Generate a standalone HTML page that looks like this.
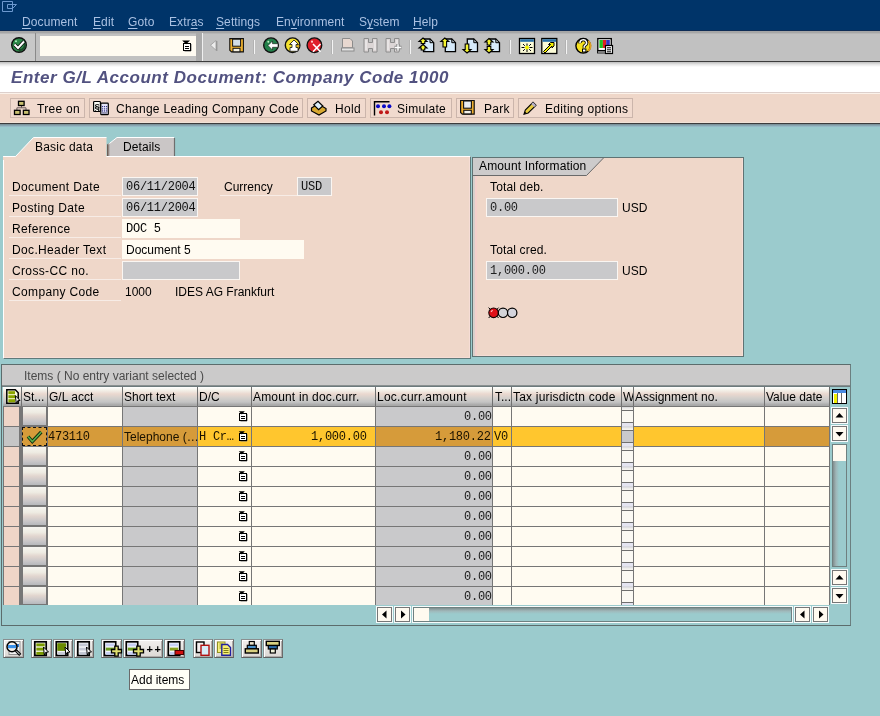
<!DOCTYPE html><html><head><meta charset="utf-8"><style>
html,body{margin:0;padding:0;width:880px;height:716px;overflow:hidden;background:#9bcbcd}
.a{position:absolute}
.s,.m,.b{will-change:transform}
.s{font:12px/14px "Liberation Sans",sans-serif;white-space:nowrap;color:#000}
.m{font:12px/14px "Liberation Mono",monospace;white-space:nowrap;letter-spacing:-0.25px;color:#000}
.b{font:italic bold 17px/18px "Liberation Sans",sans-serif;white-space:nowrap}
u{text-decoration:underline;text-underline-offset:2px}
</style></head><body>
<div class="a" style="left:0px;top:0px;width:880px;height:30px;background:#003469"></div>
<div class="a" style="left:0px;top:30px;width:880px;height:1px;background:#0e2c55"></div>
<svg class="a" style="left:0;top:0" width="20" height="14"><path d="M2.5 1.5H12.5V11.5H2.5Z M7.5 4.5H12.5L16.5 4.5L12.5 8.5H7.5Z" fill="none" stroke="#6c98cf" stroke-width="1"/></svg>
<div class="a s" style="left:22px;top:15px;color:#a9c0e2;letter-spacing:0.1px"><u>D</u>ocument</div>
<div class="a s" style="left:93px;top:15px;color:#a9c0e2;letter-spacing:0.1px"><u>E</u>dit</div>
<div class="a s" style="left:128px;top:15px;color:#a9c0e2;letter-spacing:0.1px"><u>G</u>oto</div>
<div class="a s" style="left:168.5px;top:15px;color:#a9c0e2;letter-spacing:0.1px">Extr<u>a</u>s</div>
<div class="a s" style="left:216px;top:15px;color:#a9c0e2;letter-spacing:0.1px"><u>S</u>ettings</div>
<div class="a s" style="left:275.5px;top:15px;color:#a9c0e2;letter-spacing:0.1px">En<u>v</u>ironment</div>
<div class="a s" style="left:358.5px;top:15px;color:#a9c0e2;letter-spacing:0.1px">S<u>y</u>stem</div>
<div class="a s" style="left:413px;top:15px;color:#a9c0e2;letter-spacing:0.1px"><u>H</u>elp</div>
<div class="a" style="left:0px;top:31px;width:880px;height:30px;background:linear-gradient(#a6a6a6 0,#a6a6a6 2px,#b6b6b6 2px,#b6b6b6 3px,#c1c1c1 3px,#c1c1c1 100%)"></div>
<div class="a" style="left:0px;top:61px;width:880px;height:1px;background:#3c3c3c"></div>
<div class="a" style="left:0px;top:62px;width:880px;height:5px;background:linear-gradient(#bdbdbd,#e6e6e6 50%,#ffffff)"></div>
<div class="a" style="left:0px;top:34px;width:35px;height:27px;background:#c8c8c8"></div>
<div class="a" style="left:35px;top:33px;width:1px;height:28px;background:#8a8a8a"></div>
<div class="a" style="left:196px;top:33px;width:6px;height:28px;background:#ababab"></div>
<div class="a" style="left:202px;top:33px;width:1px;height:28px;background:#f0f0f0"></div>
<div class="a" style="left:40px;top:36px;width:156px;height:20px;background:#fffbf1"></div>
<div class="a" style="left:0px;top:67px;width:880px;height:25px;background:#ffffff"></div>
<div class="a" style="left:0px;top:92px;width:880px;height:1px;background:#ddd0cc"></div>
<div class="a b" style="left:11px;top:68.5px;color:#525280;letter-spacing:0.54px">Enter G/L Account Document: Company Code 1000</div>
<div class="a" style="left:0px;top:93px;width:880px;height:30px;background:#efd7c9"></div>
<div class="a" style="left:0px;top:93px;width:880px;height:1px;background:#fbf2ea"></div>
<div class="a" style="left:0px;top:122px;width:880px;height:1px;background:#efe2d6"></div>
<div class="a" style="left:0px;top:124px;width:880px;height:592px;background:#9bcbcd"></div>
<div class="a" style="left:0px;top:123px;width:880px;height:1px;background:#3c3c3c"></div>
<div class="a" style="left:0px;top:124px;width:880px;height:3px;background:linear-gradient(#748890,#9cc4d0)"></div>
<div class="a" style="left:10px;top:98px;width:75px;height:20px;box-sizing:border-box;border:1px solid #cbb5ab;background:#f1dace"></div>
<div class="a s" style="left:37px;top:102px;color:#000;letter-spacing:0.3px">Tree on</div>
<div class="a" style="left:89px;top:98px;width:214px;height:20px;box-sizing:border-box;border:1px solid #cbb5ab;background:#f1dace"></div>
<div class="a s" style="left:116px;top:102px;color:#000;letter-spacing:0.3px">Change Leading Company Code</div>
<div class="a" style="left:307px;top:98px;width:59px;height:20px;box-sizing:border-box;border:1px solid #cbb5ab;background:#f1dace"></div>
<div class="a s" style="left:334.5px;top:102px;color:#000;letter-spacing:0.3px">Hold</div>
<div class="a" style="left:370px;top:98px;width:82px;height:20px;box-sizing:border-box;border:1px solid #cbb5ab;background:#f1dace"></div>
<div class="a s" style="left:397px;top:102px;color:#000;letter-spacing:0.3px">Simulate</div>
<div class="a" style="left:456px;top:98px;width:58px;height:20px;box-sizing:border-box;border:1px solid #cbb5ab;background:#f1dace"></div>
<div class="a s" style="left:483.5px;top:102px;color:#000;letter-spacing:0.3px">Park</div>
<div class="a" style="left:518px;top:98px;width:115px;height:20px;box-sizing:border-box;border:1px solid #cbb5ab;background:#f1dace"></div>
<div class="a s" style="left:545px;top:102px;color:#000;letter-spacing:0.3px">Editing options</div>
<div class="a" style="left:3px;top:156px;width:468px;height:203px;background:#efd7c9;box-sizing:border-box;border-left:1px solid #fff;border-top:1px solid #fff;border-right:1px solid #5f7a7a;border-bottom:1px solid #5f7a7a;box-shadow:inset -1px -1px 0 #f6ddd6"></div>
<svg class="a" style="left:100px;top:130px" width="80" height="28"><path d="M7 26 V15 L17 7.5 H74.5 V26 Z" fill="#cac6c6"/><path d="M7.5 15 L17 7.5 H74" fill="none" stroke="#ffffff" stroke-width="1"/><path d="M74.5 8 V26" stroke="#6e6e6e" stroke-width="1.2"/><defs><linearGradient id="shd" x1="0" x2="1"><stop offset="0" stop-color="#5a4a40"/><stop offset="1" stop-color="#5a4a40" stop-opacity="0"/></linearGradient></defs><path d="M7 26 V14.5 L10 12.5 V26 Z" fill="url(#shd)"/></svg>
<svg class="a" style="left:2px;top:136px" width="106" height="22"><path d="M1.5 21 V20.5 H13.5 L31.5 1.5 H104.5 V21 Z" fill="#efd7c9"/><path d="M1.5 21 V20.5 H13.5 L31.5 1.5 H104.5" fill="none" stroke="#ffffff" stroke-width="1"/></svg>
<div class="a" style="left:3px;top:157px;width:102px;height:3px;background:#efd7c9"></div>
<div class="a s" style="left:34.5px;top:140px;letter-spacing:0.2px">Basic data</div>
<div class="a s" style="left:122.5px;top:140px;letter-spacing:0.1px">Details</div>
<div class="a s" style="left:12px;top:180px;letter-spacing:0.35px">Document Date</div>
<div class="a" style="left:9px;top:195px;width:112px;height:1px;background:#f7ece6"></div>
<div class="a s" style="left:12px;top:201px;letter-spacing:0.35px">Posting Date</div>
<div class="a" style="left:9px;top:216px;width:112px;height:1px;background:#f7ece6"></div>
<div class="a s" style="left:12px;top:222px;letter-spacing:0.35px">Reference</div>
<div class="a" style="left:9px;top:237px;width:112px;height:1px;background:#f7ece6"></div>
<div class="a s" style="left:12px;top:242.5px;letter-spacing:0.35px">Doc.Header Text</div>
<div class="a" style="left:9px;top:258px;width:112px;height:1px;background:#f7ece6"></div>
<div class="a s" style="left:12px;top:263.5px;letter-spacing:0.35px">Cross-CC no.</div>
<div class="a" style="left:9px;top:279px;width:112px;height:1px;background:#f7ece6"></div>
<div class="a s" style="left:12px;top:284.5px;letter-spacing:0.35px">Company Code</div>
<div class="a" style="left:9px;top:300px;width:112px;height:1px;background:#f7ece6"></div>
<div class="a" style="left:122px;top:177px;width:76px;height:19px;background:#c9c9cb;box-sizing:border-box;border:1px solid #faf6f2;"></div>
<div class="a m" style="left:125.5px;top:180px;color:#101010">06/11/2004</div>
<div class="a s" style="left:223.5px;top:180px;letter-spacing:0px">Currency</div>
<div class="a" style="left:220px;top:195px;width:77px;height:1px;background:#f7ece6"></div>
<div class="a" style="left:297px;top:177px;width:35px;height:19px;background:#c9c9cb;box-sizing:border-box;border:1px solid #faf6f2;"></div>
<div class="a m" style="left:300.5px;top:180px;color:#101010">USD</div>
<div class="a" style="left:122px;top:198px;width:76px;height:19px;background:#c9c9cb;box-sizing:border-box;border:1px solid #faf6f2;"></div>
<div class="a m" style="left:125.5px;top:201px;color:#101010">06/11/2004</div>
<div class="a" style="left:122px;top:219px;width:118px;height:19px;background:#fffbf1;box-sizing:border-box;"></div>
<div class="a m" style="left:125.5px;top:222px;color:#000">DOC 5</div>
<div class="a" style="left:122px;top:240px;width:182px;height:19px;background:#fffbf1;box-sizing:border-box;"></div>
<div class="a s" style="left:125.5px;top:242.5px;">Document 5</div>
<div class="a" style="left:122px;top:261px;width:118px;height:19px;background:#c9c9cb;box-sizing:border-box;border:1px solid #faf6f2;"></div>
<div class="a s" style="left:125px;top:284.5px;">1000</div>
<div class="a s" style="left:174.5px;top:284.5px;">IDES AG Frankfurt</div>
<div class="a" style="left:472px;top:157px;width:272px;height:200px;background:#efd7c9;box-sizing:border-box;border:1px solid #5f7373;box-shadow:inset 2px 0 0 #d8d0cc,inset 4px 0 0 #f4d0cc,inset -1px -1px 0 #f6ddd6"></div>
<svg class="a" style="left:472px;top:157px" width="140" height="20"><path d="M1 1 H131.5 L114.5 18.5 H1 Z" fill="#cdcbcb"/><path d="M1 18.5 H114.5 L131.5 1" fill="none" stroke="#6a6a6a" stroke-width="1"/></svg>
<div class="a s" style="left:479px;top:159px;letter-spacing:0.15px">Amount Information</div>
<div class="a s" style="left:489.5px;top:180px;letter-spacing:0.15px">Total deb.</div>
<div class="a" style="left:486px;top:198px;width:132px;height:19px;background:#c9c9cb;box-sizing:border-box;border:1px solid #faf6f2;"></div>
<div class="a m" style="left:489.5px;top:201px;color:#202020">0.00</div>
<div class="a s" style="left:622.3px;top:201px;">USD</div>
<div class="a s" style="left:489.5px;top:243px;letter-spacing:0.15px">Total cred.</div>
<div class="a" style="left:486px;top:261px;width:132px;height:19px;background:#c9c9cb;box-sizing:border-box;border:1px solid #faf6f2;"></div>
<div class="a m" style="left:489.5px;top:264px;color:#202020">1,000.00</div>
<div class="a s" style="left:622.3px;top:264px;">USD</div>
<div class="a" style="left:1px;top:364px;width:850px;height:262px;box-sizing:border-box;border:1px solid #5c6c6c;border-right-color:#6b7f80"></div>
<div class="a" style="left:2px;top:365px;width:848px;height:20px;background:#cbcaca"></div>
<div class="a s" style="left:23.5px;top:369px;color:#4a4a4a">Items ( No entry variant selected )</div>
<div class="a" style="left:2px;top:385px;width:848px;height:1px;background:#8a9090"></div>
<div class="a" style="left:2px;top:386px;width:848px;height:1px;background:#6c7a7c"></div>
<div class="a" style="left:3px;top:387px;width:827px;height:19px;background:#707070"></div>
<div class="a" style="left:3px;top:387px;width:18px;height:19px;background:linear-gradient(#ffffff 0,#f4f2ea 3px,#ead8cf 7px,#d4d0cc 11px,#c4c4c4 15px,#a8a8a8 18px)"></div>
<div class="a" style="left:22px;top:387px;width:25px;height:19px;background:linear-gradient(#ffffff 0,#f4f2ea 3px,#ead8cf 7px,#d4d0cc 11px,#c4c4c4 15px,#a8a8a8 18px)"></div>
<div class="a" style="left:48px;top:387px;width:74px;height:19px;background:linear-gradient(#ffffff 0,#f4f2ea 3px,#ead8cf 7px,#d4d0cc 11px,#c4c4c4 15px,#a8a8a8 18px)"></div>
<div class="a" style="left:123px;top:387px;width:74px;height:19px;background:linear-gradient(#ffffff 0,#f4f2ea 3px,#ead8cf 7px,#d4d0cc 11px,#c4c4c4 15px,#a8a8a8 18px)"></div>
<div class="a" style="left:198px;top:387px;width:53px;height:19px;background:linear-gradient(#ffffff 0,#f4f2ea 3px,#ead8cf 7px,#d4d0cc 11px,#c4c4c4 15px,#a8a8a8 18px)"></div>
<div class="a" style="left:252px;top:387px;width:123px;height:19px;background:linear-gradient(#ffffff 0,#f4f2ea 3px,#ead8cf 7px,#d4d0cc 11px,#c4c4c4 15px,#a8a8a8 18px)"></div>
<div class="a" style="left:376px;top:387px;width:116px;height:19px;background:linear-gradient(#ffffff 0,#f4f2ea 3px,#ead8cf 7px,#d4d0cc 11px,#c4c4c4 15px,#a8a8a8 18px)"></div>
<div class="a" style="left:493px;top:387px;width:18px;height:19px;background:linear-gradient(#ffffff 0,#f4f2ea 3px,#ead8cf 7px,#d4d0cc 11px,#c4c4c4 15px,#a8a8a8 18px)"></div>
<div class="a" style="left:512px;top:387px;width:109px;height:19px;background:linear-gradient(#ffffff 0,#f4f2ea 3px,#ead8cf 7px,#d4d0cc 11px,#c4c4c4 15px,#a8a8a8 18px)"></div>
<div class="a" style="left:622px;top:387px;width:11px;height:19px;background:linear-gradient(#ffffff 0,#f4f2ea 3px,#ead8cf 7px,#d4d0cc 11px,#c4c4c4 15px,#a8a8a8 18px)"></div>
<div class="a" style="left:634px;top:387px;width:130px;height:19px;background:linear-gradient(#ffffff 0,#f4f2ea 3px,#ead8cf 7px,#d4d0cc 11px,#c4c4c4 15px,#a8a8a8 18px)"></div>
<div class="a" style="left:765px;top:387px;width:64px;height:19px;background:linear-gradient(#ffffff 0,#f4f2ea 3px,#ead8cf 7px,#d4d0cc 11px,#c4c4c4 15px,#a8a8a8 18px)"></div>
<div class="a" style="left:22px;top:387px;width:25px;height:18px;overflow:hidden"><div class="a s" style="left:1px;top:2.5px">St...</div></div>
<div class="a" style="left:48.5px;top:387px;width:73.5px;height:18px;overflow:hidden"><div class="a s" style="left:0;top:2.5px;white-space:nowrap;letter-spacing:0px">G/L acct</div></div>
<div class="a" style="left:124px;top:387px;width:73px;height:18px;overflow:hidden"><div class="a s" style="left:0;top:2.5px;white-space:nowrap;letter-spacing:0px">Short text</div></div>
<div class="a" style="left:199px;top:387px;width:52px;height:18px;overflow:hidden"><div class="a s" style="left:0;top:2.5px;white-space:nowrap;letter-spacing:0px">D/C</div></div>
<div class="a" style="left:253px;top:387px;width:122px;height:18px;overflow:hidden"><div class="a s" style="left:0;top:2.5px;white-space:nowrap;letter-spacing:0.17px">Amount in doc.curr.</div></div>
<div class="a" style="left:377px;top:387px;width:115px;height:18px;overflow:hidden"><div class="a s" style="left:0;top:2.5px;white-space:nowrap;letter-spacing:0.25px">Loc.curr.amount</div></div>
<div class="a" style="left:495px;top:387px;width:16px;height:18px;overflow:hidden"><div class="a s" style="left:0;top:2.5px;white-space:nowrap;letter-spacing:0px">T...</div></div>
<div class="a" style="left:513px;top:387px;width:108px;height:18px;overflow:hidden"><div class="a s" style="left:0;top:2.5px;white-space:nowrap;letter-spacing:0.2px">Tax jurisdictn code</div></div>
<div class="a" style="left:622.5px;top:387px;width:10.5px;height:18px;overflow:hidden"><div class="a s" style="left:0;top:2.5px;white-space:nowrap;letter-spacing:0px">W</div></div>
<div class="a" style="left:635px;top:387px;width:129px;height:18px;overflow:hidden"><div class="a s" style="left:0;top:2.5px;white-space:nowrap;letter-spacing:0px">Assignment no.</div></div>
<div class="a" style="left:766px;top:387px;width:63px;height:18px;overflow:hidden"><div class="a s" style="left:0;top:2.5px;white-space:nowrap;letter-spacing:0px">Value date</div></div>
<div class="a" style="left:3px;top:406px;width:827px;height:199px;background:#767676"></div>
<div class="a" style="left:4px;top:407px;width:15px;height:19px;background:#efd5c7"></div>
<div class="a" style="left:23px;top:407px;width:23px;height:18px;background:linear-gradient(#f6f5f0 0,#eeebe2 30%,#e2d6cf 50%,#c8c6c8 80%,#b6b8bc 100%)"></div>
<div class="a" style="left:48px;top:407px;width:74px;height:19px;background:#fffbf1"></div>
<div class="a" style="left:123px;top:407px;width:74px;height:19px;background:#c9c9cb"></div>
<div class="a" style="left:198px;top:407px;width:53px;height:19px;background:#fffbf1"></div>
<div class="a" style="left:252px;top:407px;width:123px;height:19px;background:#fffbf1"></div>
<div class="a" style="left:376px;top:407px;width:116px;height:19px;background:#c9c9cb"></div>
<div class="a" style="left:493px;top:407px;width:18px;height:19px;background:#fffbf1"></div>
<div class="a" style="left:512px;top:407px;width:109px;height:19px;background:#fffbf1"></div>
<div class="a" style="left:622px;top:407px;width:11px;height:19px;background:linear-gradient(#d6d6d8 0,#e8e8e8 1px,#f4f2ee 2px,#f4f2ee 16px,#e4e4f0 16px)"></div>
<div class="a" style="left:622px;top:410px;width:11px;height:13px;background:#fbf9f3;box-sizing:border-box;border-top:1px solid #6e6e6e;border-bottom:1px solid #6e6e6e"></div>
<div class="a" style="left:634px;top:407px;width:130px;height:19px;background:#fffbf1"></div>
<div class="a" style="left:765px;top:407px;width:64px;height:19px;background:#fffbf1"></div>
<svg class="a" style="left:238px;top:410px" width="11" height="13"><path d="M9 4V11H2.5" fill="none" stroke="#707070" stroke-width="1"/><rect x="1.5" y="3.5" width="7" height="7" fill="#fff" stroke="#000" stroke-width="1"/><path d="M1.5 3.5V10.5" stroke="#000" stroke-width="1"/><path d="M0.8 1.3 H6.8 L3.8 4.5 Z" fill="#000"/><path d="M2 3.5H8.5" stroke="#000" stroke-width="1"/><path d="M3 6.5H7M3 8.5H7" stroke="#000" stroke-width="1"/></svg>
<div class="a m" style="left:463.8px;top:410px;color:#1a1a1a">0.00</div>
<div class="a" style="left:4px;top:427px;width:15px;height:19px;background:#c6c6c6"></div>
<div class="a" style="left:23px;top:427px;width:23px;height:18px;background:linear-gradient(#f6f5f0 0,#eeebe2 30%,#e2d6cf 50%,#c8c6c8 80%,#b6b8bc 100%)"></div>
<div class="a" style="left:48px;top:427px;width:74px;height:19px;background:#d69b3a"></div>
<div class="a" style="left:123px;top:427px;width:74px;height:19px;background:#d69b3a"></div>
<div class="a" style="left:198px;top:427px;width:53px;height:19px;background:#ffc62e"></div>
<div class="a" style="left:252px;top:427px;width:123px;height:19px;background:#ffc62e"></div>
<div class="a" style="left:376px;top:427px;width:116px;height:19px;background:#d69b3a"></div>
<div class="a" style="left:493px;top:427px;width:18px;height:19px;background:#ffc62e"></div>
<div class="a" style="left:512px;top:427px;width:109px;height:19px;background:#ffc62e"></div>
<div class="a" style="left:622px;top:426px;width:11px;height:1px;background:#d8d8e0"></div>
<div class="a" style="left:622px;top:427px;width:11px;height:19px;background:linear-gradient(#d6d6d8 0,#e8e8e8 1px,#f4f2ee 2px,#f4f2ee 16px,#e4e4f0 16px)"></div>
<div class="a" style="left:622px;top:430px;width:11px;height:13px;background:#c9c9cc;box-sizing:border-box;border-top:1px solid #6e6e6e;border-bottom:1px solid #6e6e6e"></div>
<div class="a" style="left:634px;top:427px;width:130px;height:19px;background:#ffc62e"></div>
<div class="a" style="left:765px;top:427px;width:64px;height:19px;background:#d69b3a"></div>
<svg class="a" style="left:238px;top:430px" width="11" height="13"><path d="M9 4V11H2.5" fill="none" stroke="#707070" stroke-width="1"/><rect x="1.5" y="3.5" width="7" height="7" fill="#fff" stroke="#000" stroke-width="1"/><path d="M1.5 3.5V10.5" stroke="#000" stroke-width="1"/><path d="M0.8 1.3 H6.8 L3.8 4.5 Z" fill="#000"/><path d="M2 3.5H8.5" stroke="#000" stroke-width="1"/><path d="M3 6.5H7M3 8.5H7" stroke="#000" stroke-width="1"/></svg>
<div class="a m" style="left:48px;top:430px;color:#1a1200">473110</div>
<div class="a s" style="left:124px;top:430px;color:#1a1200">Telephone (…</div>
<div class="a m" style="left:199px;top:430px;color:#1a1200">H Cr…</div>
<div class="a m" style="left:311px;top:430px;color:#1a1200">1,000.00</div>
<div class="a m" style="left:435.2px;top:430px;color:#1a1200">1,180.22</div>
<div class="a m" style="left:493.5px;top:430px;color:#1a1200">V0</div>
<div class="a" style="left:4px;top:447px;width:15px;height:19px;background:#efd5c7"></div>
<div class="a" style="left:23px;top:447px;width:23px;height:18px;background:linear-gradient(#f6f5f0 0,#eeebe2 30%,#e2d6cf 50%,#c8c6c8 80%,#b6b8bc 100%)"></div>
<div class="a" style="left:48px;top:447px;width:74px;height:19px;background:#fffbf1"></div>
<div class="a" style="left:123px;top:447px;width:74px;height:19px;background:#c9c9cb"></div>
<div class="a" style="left:198px;top:447px;width:53px;height:19px;background:#fffbf1"></div>
<div class="a" style="left:252px;top:447px;width:123px;height:19px;background:#fffbf1"></div>
<div class="a" style="left:376px;top:447px;width:116px;height:19px;background:#c9c9cb"></div>
<div class="a" style="left:493px;top:447px;width:18px;height:19px;background:#fffbf1"></div>
<div class="a" style="left:512px;top:447px;width:109px;height:19px;background:#fffbf1"></div>
<div class="a" style="left:622px;top:446px;width:11px;height:1px;background:#d8d8e0"></div>
<div class="a" style="left:622px;top:447px;width:11px;height:19px;background:linear-gradient(#d6d6d8 0,#e8e8e8 1px,#f4f2ee 2px,#f4f2ee 16px,#e4e4f0 16px)"></div>
<div class="a" style="left:622px;top:450px;width:11px;height:13px;background:#fbf9f3;box-sizing:border-box;border-top:1px solid #6e6e6e;border-bottom:1px solid #6e6e6e"></div>
<div class="a" style="left:634px;top:447px;width:130px;height:19px;background:#fffbf1"></div>
<div class="a" style="left:765px;top:447px;width:64px;height:19px;background:#fffbf1"></div>
<svg class="a" style="left:238px;top:450px" width="11" height="13"><path d="M9 4V11H2.5" fill="none" stroke="#707070" stroke-width="1"/><rect x="1.5" y="3.5" width="7" height="7" fill="#fff" stroke="#000" stroke-width="1"/><path d="M1.5 3.5V10.5" stroke="#000" stroke-width="1"/><path d="M0.8 1.3 H6.8 L3.8 4.5 Z" fill="#000"/><path d="M2 3.5H8.5" stroke="#000" stroke-width="1"/><path d="M3 6.5H7M3 8.5H7" stroke="#000" stroke-width="1"/></svg>
<div class="a m" style="left:463.8px;top:450px;color:#1a1a1a">0.00</div>
<div class="a" style="left:4px;top:467px;width:15px;height:19px;background:#efd5c7"></div>
<div class="a" style="left:23px;top:467px;width:23px;height:18px;background:linear-gradient(#f6f5f0 0,#eeebe2 30%,#e2d6cf 50%,#c8c6c8 80%,#b6b8bc 100%)"></div>
<div class="a" style="left:48px;top:467px;width:74px;height:19px;background:#fffbf1"></div>
<div class="a" style="left:123px;top:467px;width:74px;height:19px;background:#c9c9cb"></div>
<div class="a" style="left:198px;top:467px;width:53px;height:19px;background:#fffbf1"></div>
<div class="a" style="left:252px;top:467px;width:123px;height:19px;background:#fffbf1"></div>
<div class="a" style="left:376px;top:467px;width:116px;height:19px;background:#c9c9cb"></div>
<div class="a" style="left:493px;top:467px;width:18px;height:19px;background:#fffbf1"></div>
<div class="a" style="left:512px;top:467px;width:109px;height:19px;background:#fffbf1"></div>
<div class="a" style="left:622px;top:466px;width:11px;height:1px;background:#d8d8e0"></div>
<div class="a" style="left:622px;top:467px;width:11px;height:19px;background:linear-gradient(#d6d6d8 0,#e8e8e8 1px,#f4f2ee 2px,#f4f2ee 16px,#e4e4f0 16px)"></div>
<div class="a" style="left:622px;top:470px;width:11px;height:13px;background:#fbf9f3;box-sizing:border-box;border-top:1px solid #6e6e6e;border-bottom:1px solid #6e6e6e"></div>
<div class="a" style="left:634px;top:467px;width:130px;height:19px;background:#fffbf1"></div>
<div class="a" style="left:765px;top:467px;width:64px;height:19px;background:#fffbf1"></div>
<svg class="a" style="left:238px;top:470px" width="11" height="13"><path d="M9 4V11H2.5" fill="none" stroke="#707070" stroke-width="1"/><rect x="1.5" y="3.5" width="7" height="7" fill="#fff" stroke="#000" stroke-width="1"/><path d="M1.5 3.5V10.5" stroke="#000" stroke-width="1"/><path d="M0.8 1.3 H6.8 L3.8 4.5 Z" fill="#000"/><path d="M2 3.5H8.5" stroke="#000" stroke-width="1"/><path d="M3 6.5H7M3 8.5H7" stroke="#000" stroke-width="1"/></svg>
<div class="a m" style="left:463.8px;top:470px;color:#1a1a1a">0.00</div>
<div class="a" style="left:4px;top:487px;width:15px;height:19px;background:#efd5c7"></div>
<div class="a" style="left:23px;top:487px;width:23px;height:18px;background:linear-gradient(#f6f5f0 0,#eeebe2 30%,#e2d6cf 50%,#c8c6c8 80%,#b6b8bc 100%)"></div>
<div class="a" style="left:48px;top:487px;width:74px;height:19px;background:#fffbf1"></div>
<div class="a" style="left:123px;top:487px;width:74px;height:19px;background:#c9c9cb"></div>
<div class="a" style="left:198px;top:487px;width:53px;height:19px;background:#fffbf1"></div>
<div class="a" style="left:252px;top:487px;width:123px;height:19px;background:#fffbf1"></div>
<div class="a" style="left:376px;top:487px;width:116px;height:19px;background:#c9c9cb"></div>
<div class="a" style="left:493px;top:487px;width:18px;height:19px;background:#fffbf1"></div>
<div class="a" style="left:512px;top:487px;width:109px;height:19px;background:#fffbf1"></div>
<div class="a" style="left:622px;top:486px;width:11px;height:1px;background:#d8d8e0"></div>
<div class="a" style="left:622px;top:487px;width:11px;height:19px;background:linear-gradient(#d6d6d8 0,#e8e8e8 1px,#f4f2ee 2px,#f4f2ee 16px,#e4e4f0 16px)"></div>
<div class="a" style="left:622px;top:490px;width:11px;height:13px;background:#fbf9f3;box-sizing:border-box;border-top:1px solid #6e6e6e;border-bottom:1px solid #6e6e6e"></div>
<div class="a" style="left:634px;top:487px;width:130px;height:19px;background:#fffbf1"></div>
<div class="a" style="left:765px;top:487px;width:64px;height:19px;background:#fffbf1"></div>
<svg class="a" style="left:238px;top:490px" width="11" height="13"><path d="M9 4V11H2.5" fill="none" stroke="#707070" stroke-width="1"/><rect x="1.5" y="3.5" width="7" height="7" fill="#fff" stroke="#000" stroke-width="1"/><path d="M1.5 3.5V10.5" stroke="#000" stroke-width="1"/><path d="M0.8 1.3 H6.8 L3.8 4.5 Z" fill="#000"/><path d="M2 3.5H8.5" stroke="#000" stroke-width="1"/><path d="M3 6.5H7M3 8.5H7" stroke="#000" stroke-width="1"/></svg>
<div class="a m" style="left:463.8px;top:490px;color:#1a1a1a">0.00</div>
<div class="a" style="left:4px;top:507px;width:15px;height:19px;background:#efd5c7"></div>
<div class="a" style="left:23px;top:507px;width:23px;height:18px;background:linear-gradient(#f6f5f0 0,#eeebe2 30%,#e2d6cf 50%,#c8c6c8 80%,#b6b8bc 100%)"></div>
<div class="a" style="left:48px;top:507px;width:74px;height:19px;background:#fffbf1"></div>
<div class="a" style="left:123px;top:507px;width:74px;height:19px;background:#c9c9cb"></div>
<div class="a" style="left:198px;top:507px;width:53px;height:19px;background:#fffbf1"></div>
<div class="a" style="left:252px;top:507px;width:123px;height:19px;background:#fffbf1"></div>
<div class="a" style="left:376px;top:507px;width:116px;height:19px;background:#c9c9cb"></div>
<div class="a" style="left:493px;top:507px;width:18px;height:19px;background:#fffbf1"></div>
<div class="a" style="left:512px;top:507px;width:109px;height:19px;background:#fffbf1"></div>
<div class="a" style="left:622px;top:506px;width:11px;height:1px;background:#d8d8e0"></div>
<div class="a" style="left:622px;top:507px;width:11px;height:19px;background:linear-gradient(#d6d6d8 0,#e8e8e8 1px,#f4f2ee 2px,#f4f2ee 16px,#e4e4f0 16px)"></div>
<div class="a" style="left:622px;top:510px;width:11px;height:13px;background:#fbf9f3;box-sizing:border-box;border-top:1px solid #6e6e6e;border-bottom:1px solid #6e6e6e"></div>
<div class="a" style="left:634px;top:507px;width:130px;height:19px;background:#fffbf1"></div>
<div class="a" style="left:765px;top:507px;width:64px;height:19px;background:#fffbf1"></div>
<svg class="a" style="left:238px;top:510px" width="11" height="13"><path d="M9 4V11H2.5" fill="none" stroke="#707070" stroke-width="1"/><rect x="1.5" y="3.5" width="7" height="7" fill="#fff" stroke="#000" stroke-width="1"/><path d="M1.5 3.5V10.5" stroke="#000" stroke-width="1"/><path d="M0.8 1.3 H6.8 L3.8 4.5 Z" fill="#000"/><path d="M2 3.5H8.5" stroke="#000" stroke-width="1"/><path d="M3 6.5H7M3 8.5H7" stroke="#000" stroke-width="1"/></svg>
<div class="a m" style="left:463.8px;top:510px;color:#1a1a1a">0.00</div>
<div class="a" style="left:4px;top:527px;width:15px;height:19px;background:#efd5c7"></div>
<div class="a" style="left:23px;top:527px;width:23px;height:18px;background:linear-gradient(#f6f5f0 0,#eeebe2 30%,#e2d6cf 50%,#c8c6c8 80%,#b6b8bc 100%)"></div>
<div class="a" style="left:48px;top:527px;width:74px;height:19px;background:#fffbf1"></div>
<div class="a" style="left:123px;top:527px;width:74px;height:19px;background:#c9c9cb"></div>
<div class="a" style="left:198px;top:527px;width:53px;height:19px;background:#fffbf1"></div>
<div class="a" style="left:252px;top:527px;width:123px;height:19px;background:#fffbf1"></div>
<div class="a" style="left:376px;top:527px;width:116px;height:19px;background:#c9c9cb"></div>
<div class="a" style="left:493px;top:527px;width:18px;height:19px;background:#fffbf1"></div>
<div class="a" style="left:512px;top:527px;width:109px;height:19px;background:#fffbf1"></div>
<div class="a" style="left:622px;top:526px;width:11px;height:1px;background:#d8d8e0"></div>
<div class="a" style="left:622px;top:527px;width:11px;height:19px;background:linear-gradient(#d6d6d8 0,#e8e8e8 1px,#f4f2ee 2px,#f4f2ee 16px,#e4e4f0 16px)"></div>
<div class="a" style="left:622px;top:530px;width:11px;height:13px;background:#fbf9f3;box-sizing:border-box;border-top:1px solid #6e6e6e;border-bottom:1px solid #6e6e6e"></div>
<div class="a" style="left:634px;top:527px;width:130px;height:19px;background:#fffbf1"></div>
<div class="a" style="left:765px;top:527px;width:64px;height:19px;background:#fffbf1"></div>
<svg class="a" style="left:238px;top:530px" width="11" height="13"><path d="M9 4V11H2.5" fill="none" stroke="#707070" stroke-width="1"/><rect x="1.5" y="3.5" width="7" height="7" fill="#fff" stroke="#000" stroke-width="1"/><path d="M1.5 3.5V10.5" stroke="#000" stroke-width="1"/><path d="M0.8 1.3 H6.8 L3.8 4.5 Z" fill="#000"/><path d="M2 3.5H8.5" stroke="#000" stroke-width="1"/><path d="M3 6.5H7M3 8.5H7" stroke="#000" stroke-width="1"/></svg>
<div class="a m" style="left:463.8px;top:530px;color:#1a1a1a">0.00</div>
<div class="a" style="left:4px;top:547px;width:15px;height:19px;background:#efd5c7"></div>
<div class="a" style="left:23px;top:547px;width:23px;height:18px;background:linear-gradient(#f6f5f0 0,#eeebe2 30%,#e2d6cf 50%,#c8c6c8 80%,#b6b8bc 100%)"></div>
<div class="a" style="left:48px;top:547px;width:74px;height:19px;background:#fffbf1"></div>
<div class="a" style="left:123px;top:547px;width:74px;height:19px;background:#c9c9cb"></div>
<div class="a" style="left:198px;top:547px;width:53px;height:19px;background:#fffbf1"></div>
<div class="a" style="left:252px;top:547px;width:123px;height:19px;background:#fffbf1"></div>
<div class="a" style="left:376px;top:547px;width:116px;height:19px;background:#c9c9cb"></div>
<div class="a" style="left:493px;top:547px;width:18px;height:19px;background:#fffbf1"></div>
<div class="a" style="left:512px;top:547px;width:109px;height:19px;background:#fffbf1"></div>
<div class="a" style="left:622px;top:546px;width:11px;height:1px;background:#d8d8e0"></div>
<div class="a" style="left:622px;top:547px;width:11px;height:19px;background:linear-gradient(#d6d6d8 0,#e8e8e8 1px,#f4f2ee 2px,#f4f2ee 16px,#e4e4f0 16px)"></div>
<div class="a" style="left:622px;top:550px;width:11px;height:13px;background:#fbf9f3;box-sizing:border-box;border-top:1px solid #6e6e6e;border-bottom:1px solid #6e6e6e"></div>
<div class="a" style="left:634px;top:547px;width:130px;height:19px;background:#fffbf1"></div>
<div class="a" style="left:765px;top:547px;width:64px;height:19px;background:#fffbf1"></div>
<svg class="a" style="left:238px;top:550px" width="11" height="13"><path d="M9 4V11H2.5" fill="none" stroke="#707070" stroke-width="1"/><rect x="1.5" y="3.5" width="7" height="7" fill="#fff" stroke="#000" stroke-width="1"/><path d="M1.5 3.5V10.5" stroke="#000" stroke-width="1"/><path d="M0.8 1.3 H6.8 L3.8 4.5 Z" fill="#000"/><path d="M2 3.5H8.5" stroke="#000" stroke-width="1"/><path d="M3 6.5H7M3 8.5H7" stroke="#000" stroke-width="1"/></svg>
<div class="a m" style="left:463.8px;top:550px;color:#1a1a1a">0.00</div>
<div class="a" style="left:4px;top:567px;width:15px;height:19px;background:#efd5c7"></div>
<div class="a" style="left:23px;top:567px;width:23px;height:18px;background:linear-gradient(#f6f5f0 0,#eeebe2 30%,#e2d6cf 50%,#c8c6c8 80%,#b6b8bc 100%)"></div>
<div class="a" style="left:48px;top:567px;width:74px;height:19px;background:#fffbf1"></div>
<div class="a" style="left:123px;top:567px;width:74px;height:19px;background:#c9c9cb"></div>
<div class="a" style="left:198px;top:567px;width:53px;height:19px;background:#fffbf1"></div>
<div class="a" style="left:252px;top:567px;width:123px;height:19px;background:#fffbf1"></div>
<div class="a" style="left:376px;top:567px;width:116px;height:19px;background:#c9c9cb"></div>
<div class="a" style="left:493px;top:567px;width:18px;height:19px;background:#fffbf1"></div>
<div class="a" style="left:512px;top:567px;width:109px;height:19px;background:#fffbf1"></div>
<div class="a" style="left:622px;top:566px;width:11px;height:1px;background:#d8d8e0"></div>
<div class="a" style="left:622px;top:567px;width:11px;height:19px;background:linear-gradient(#d6d6d8 0,#e8e8e8 1px,#f4f2ee 2px,#f4f2ee 16px,#e4e4f0 16px)"></div>
<div class="a" style="left:622px;top:570px;width:11px;height:13px;background:#fbf9f3;box-sizing:border-box;border-top:1px solid #6e6e6e;border-bottom:1px solid #6e6e6e"></div>
<div class="a" style="left:634px;top:567px;width:130px;height:19px;background:#fffbf1"></div>
<div class="a" style="left:765px;top:567px;width:64px;height:19px;background:#fffbf1"></div>
<svg class="a" style="left:238px;top:570px" width="11" height="13"><path d="M9 4V11H2.5" fill="none" stroke="#707070" stroke-width="1"/><rect x="1.5" y="3.5" width="7" height="7" fill="#fff" stroke="#000" stroke-width="1"/><path d="M1.5 3.5V10.5" stroke="#000" stroke-width="1"/><path d="M0.8 1.3 H6.8 L3.8 4.5 Z" fill="#000"/><path d="M2 3.5H8.5" stroke="#000" stroke-width="1"/><path d="M3 6.5H7M3 8.5H7" stroke="#000" stroke-width="1"/></svg>
<div class="a m" style="left:463.8px;top:570px;color:#1a1a1a">0.00</div>
<div class="a" style="left:4px;top:587px;width:15px;height:18px;background:#efd5c7"></div>
<div class="a" style="left:23px;top:587px;width:23px;height:17px;background:linear-gradient(#f6f5f0 0,#eeebe2 30%,#e2d6cf 50%,#c8c6c8 80%,#b6b8bc 100%)"></div>
<div class="a" style="left:48px;top:587px;width:74px;height:18px;background:#fffbf1"></div>
<div class="a" style="left:123px;top:587px;width:74px;height:18px;background:#c9c9cb"></div>
<div class="a" style="left:198px;top:587px;width:53px;height:18px;background:#fffbf1"></div>
<div class="a" style="left:252px;top:587px;width:123px;height:18px;background:#fffbf1"></div>
<div class="a" style="left:376px;top:587px;width:116px;height:18px;background:#c9c9cb"></div>
<div class="a" style="left:493px;top:587px;width:18px;height:18px;background:#fffbf1"></div>
<div class="a" style="left:512px;top:587px;width:109px;height:18px;background:#fffbf1"></div>
<div class="a" style="left:622px;top:586px;width:11px;height:1px;background:#d8d8e0"></div>
<div class="a" style="left:622px;top:587px;width:11px;height:18px;background:linear-gradient(#d6d6d8 0,#e8e8e8 1px,#f4f2ee 2px,#f4f2ee 16px,#e4e4f0 16px)"></div>
<div class="a" style="left:622px;top:590px;width:11px;height:13px;background:#fbf9f3;box-sizing:border-box;border-top:1px solid #6e6e6e;border-bottom:1px solid #6e6e6e"></div>
<div class="a" style="left:634px;top:587px;width:130px;height:18px;background:#fffbf1"></div>
<div class="a" style="left:765px;top:587px;width:64px;height:18px;background:#fffbf1"></div>
<svg class="a" style="left:238px;top:590px" width="11" height="13"><path d="M9 4V11H2.5" fill="none" stroke="#707070" stroke-width="1"/><rect x="1.5" y="3.5" width="7" height="7" fill="#fff" stroke="#000" stroke-width="1"/><path d="M1.5 3.5V10.5" stroke="#000" stroke-width="1"/><path d="M0.8 1.3 H6.8 L3.8 4.5 Z" fill="#000"/><path d="M2 3.5H8.5" stroke="#000" stroke-width="1"/><path d="M3 6.5H7M3 8.5H7" stroke="#000" stroke-width="1"/></svg>
<div class="a m" style="left:463.8px;top:590px;color:#1a1a1a">0.00</div>
<div class="a" style="left:22px;top:427px;width:25px;height:19px;background:#d69b3a;box-sizing:border-box;border:1px dashed #111"></div>
<svg class="a" style="left:26px;top:429px" width="18" height="15"><path d="M2 7.5 L6.3 12.5 L15.3 3" fill="none" stroke="#102a10" stroke-width="3.4"/><path d="M2 7.5 L6.3 12.5 L15.3 3" fill="none" stroke="#5ab04a" stroke-width="1.6"/></svg>
<svg class="a" style="left:0;top:385px" width="22" height="22"><path d="M6.8 4.8 H15.3 L18.2 7.7 V18.2 H6.8 Z" fill="#fcfcdc" stroke="#000" stroke-width="1.5"/><rect x="8.4" y="6.2" width="6.6" height="3" fill="#8aa400"/><rect x="8.4" y="10.2" width="6.6" height="3" fill="#8aa400"/><rect x="8.4" y="14.2" width="6.6" height="3" fill="#8aa400"/><path d="M15.3 10.5 L20 15.5 L17.6 15.8 L16.3 18.8 Z" fill="#fff" stroke="#000" stroke-width="1"/></svg>
<svg class="a" style="left:832px;top:389px" width="16" height="16"><rect x="0.5" y="0.5" width="14" height="14" fill="#fff" stroke="#000"/><rect x="1" y="1" width="13" height="3" fill="#4a8ae0"/><rect x="2" y="5" width="3" height="9" fill="#f0f000"/><path d="M5.5 4V14M9.5 4V14" stroke="#6a6a6a"/></svg>
<div class="a" style="left:832px;top:408px;width:15px;height:15px;box-sizing:border-box;background:#fffaf0;border:1px solid #767676;outline:1px solid #f6fbfb"></div>
<svg class="a" style="left:832px;top:408px" width="15" height="15"><path d="M3.5 9.5H11.5L7.5 5Z" fill="#000"/></svg>
<div class="a" style="left:832px;top:426px;width:15px;height:15px;box-sizing:border-box;background:#fffaf0;border:1px solid #767676;outline:1px solid #f6fbfb"></div>
<svg class="a" style="left:832px;top:426px" width="15" height="15"><path d="M3.5 6H11.5L7.5 10.5Z" fill="#000"/></svg>
<div class="a" style="left:832px;top:444px;width:15px;height:123px;box-sizing:border-box;background:linear-gradient(90deg,#808d8e 0,#9fb6b8 3px,#9bcbcd 6px);border:1px solid #6f8080"></div>
<div class="a" style="left:833px;top:445px;width:13px;height:16px;background:#fffaf0"></div>
<div class="a" style="left:832px;top:570px;width:15px;height:15px;box-sizing:border-box;background:#fffaf0;border:1px solid #767676;outline:1px solid #f6fbfb"></div>
<svg class="a" style="left:832px;top:570px" width="15" height="15"><path d="M3.5 9.5H11.5L7.5 5Z" fill="#000"/></svg>
<div class="a" style="left:832px;top:588px;width:15px;height:15px;box-sizing:border-box;background:#fffaf0;border:1px solid #767676;outline:1px solid #f6fbfb"></div>
<svg class="a" style="left:832px;top:588px" width="15" height="15"><path d="M3.5 6H11.5L7.5 10.5Z" fill="#000"/></svg>
<div class="a" style="left:377px;top:607px;width:15px;height:15px;box-sizing:border-box;background:#fffaf0;border:1px solid #767676;outline:1px solid #f6fbfb"></div>
<svg class="a" style="left:377px;top:607px" width="15" height="15"><path d="M9.5 3.5V11.5L5 7.5Z" fill="#000"/></svg>
<div class="a" style="left:395px;top:607px;width:15px;height:15px;box-sizing:border-box;background:#fffaf0;border:1px solid #767676;outline:1px solid #f6fbfb"></div>
<svg class="a" style="left:395px;top:607px" width="15" height="15"><path d="M6 3.5V11.5L10.5 7.5Z" fill="#000"/></svg>
<div class="a" style="left:413px;top:607px;width:379px;height:15px;box-sizing:border-box;background:linear-gradient(#7e8d8e 0,#a0b8ba 3px,#9bcbcd 6px);border:1px solid #6f8080;outline:1px solid #f6fbfb"></div>
<div class="a" style="left:414px;top:608px;width:15px;height:13px;background:#fffaf0"></div>
<div class="a" style="left:795px;top:607px;width:15px;height:15px;box-sizing:border-box;background:#fffaf0;border:1px solid #767676;outline:1px solid #f6fbfb"></div>
<svg class="a" style="left:795px;top:607px" width="15" height="15"><path d="M9.5 3.5V11.5L5 7.5Z" fill="#000"/></svg>
<div class="a" style="left:813px;top:607px;width:15px;height:15px;box-sizing:border-box;background:#fffaf0;border:1px solid #767676;outline:1px solid #f6fbfb"></div>
<svg class="a" style="left:813px;top:607px" width="15" height="15"><path d="M6 3.5V11.5L10.5 7.5Z" fill="#000"/></svg>
<div class="a" style="left:3px;top:638.5px;width:21px;height:19.5px;box-sizing:border-box;background:linear-gradient(#f2f0ee,#dcd8d4);border:1px solid;border-color:#8a8f90 #6a6a6a #5e6060 #8a8f90;box-shadow:inset 1px 1px 0 #ffffff,inset -1px -1px 0 #b0acaa"></div>
<div class="a" style="left:31px;top:638.5px;width:21px;height:19.5px;box-sizing:border-box;background:linear-gradient(#f2f0ee,#dcd8d4);border:1px solid;border-color:#8a8f90 #6a6a6a #5e6060 #8a8f90;box-shadow:inset 1px 1px 0 #ffffff,inset -1px -1px 0 #b0acaa"></div>
<div class="a" style="left:53px;top:638.5px;width:20px;height:19.5px;box-sizing:border-box;background:linear-gradient(#f2f0ee,#dcd8d4);border:1px solid;border-color:#8a8f90 #6a6a6a #5e6060 #8a8f90;box-shadow:inset 1px 1px 0 #ffffff,inset -1px -1px 0 #b0acaa"></div>
<div class="a" style="left:74px;top:638.5px;width:20px;height:19.5px;box-sizing:border-box;background:linear-gradient(#f2f0ee,#dcd8d4);border:1px solid;border-color:#8a8f90 #6a6a6a #5e6060 #8a8f90;box-shadow:inset 1px 1px 0 #ffffff,inset -1px -1px 0 #b0acaa"></div>
<div class="a" style="left:101px;top:638.5px;width:21px;height:19.5px;box-sizing:border-box;background:linear-gradient(#f2f0ee,#dcd8d4);border:1px solid;border-color:#8a8f90 #6a6a6a #5e6060 #8a8f90;box-shadow:inset 1px 1px 0 #ffffff,inset -1px -1px 0 #b0acaa"></div>
<div class="a" style="left:123px;top:638.5px;width:40px;height:19.5px;box-sizing:border-box;background:linear-gradient(#f2f0ee,#dcd8d4);border:1px solid;border-color:#8a8f90 #6a6a6a #5e6060 #8a8f90;box-shadow:inset 1px 1px 0 #ffffff,inset -1px -1px 0 #b0acaa"></div>
<div class="a" style="left:164px;top:638.5px;width:21px;height:19.5px;box-sizing:border-box;background:linear-gradient(#f2f0ee,#dcd8d4);border:1px solid;border-color:#8a8f90 #6a6a6a #5e6060 #8a8f90;box-shadow:inset 1px 1px 0 #ffffff,inset -1px -1px 0 #b0acaa"></div>
<div class="a" style="left:193px;top:638.5px;width:20px;height:19.5px;box-sizing:border-box;background:linear-gradient(#f2f0ee,#dcd8d4);border:1px solid;border-color:#8a8f90 #6a6a6a #5e6060 #8a8f90;box-shadow:inset 1px 1px 0 #ffffff,inset -1px -1px 0 #b0acaa"></div>
<div class="a" style="left:214px;top:638.5px;width:20px;height:19.5px;box-sizing:border-box;background:linear-gradient(#f2f0ee,#dcd8d4);border:1px solid;border-color:#8a8f90 #6a6a6a #5e6060 #8a8f90;box-shadow:inset 1px 1px 0 #ffffff,inset -1px -1px 0 #b0acaa"></div>
<div class="a" style="left:241px;top:638.5px;width:21px;height:19.5px;box-sizing:border-box;background:linear-gradient(#f2f0ee,#dcd8d4);border:1px solid;border-color:#8a8f90 #6a6a6a #5e6060 #8a8f90;box-shadow:inset 1px 1px 0 #ffffff,inset -1px -1px 0 #b0acaa"></div>
<div class="a" style="left:263px;top:638.5px;width:20px;height:19.5px;box-sizing:border-box;background:linear-gradient(#f2f0ee,#dcd8d4);border:1px solid;border-color:#8a8f90 #6a6a6a #5e6060 #8a8f90;box-shadow:inset 1px 1px 0 #ffffff,inset -1px -1px 0 #b0acaa"></div>
<div class="a" style="left:129px;top:669px;width:61px;height:21px;box-sizing:border-box;background:#fffff6;border:1px solid #6a6a6a"></div>
<div class="a s" style="left:131px;top:673px;color:#000">Add items</div>
<svg class="a" style="left:0;top:0" width="880" height="716"><circle cx="19" cy="45" r="7.3" fill="#2e8a4a" stroke="#101010" stroke-width="1.4"/><path d="M19 50 A5.5 5.5 0 0 0 25 43" fill="none" stroke="#1c4a2a" stroke-width="2"/><circle cx="16" cy="41.3" r="1" fill="#b0f0c0"/><path d="M14.5 44.5 L18 48 L24 41.5" fill="none" stroke="#0a0a0a" stroke-width="3.6"/><path d="M14.5 44.5 L18 48 L24 41.5" fill="none" stroke="#ffffff" stroke-width="2"/><path d="M191 44V51H184.5" fill="none" stroke="#707070" stroke-width="1"/><rect x="183.5" y="43.5" width="7" height="7" fill="#fff" stroke="#000" stroke-width="1"/><path d="M182.2 40.5 H190 L186.1 44.2 Z" fill="#000"/><path d="M183.5 43.5H190.5" stroke="#000"/><path d="M185 46.5H189M185 48.5H189" stroke="#000" stroke-width="1"/><path d="M210.5 45.2 L216 40.5 V50.2 Z" fill="#ececec" stroke="#9a9a9a" stroke-width="0.8"/><path d="M216.8 41V51" stroke="#8a8a8a" stroke-width="1"/><path d="M229.8 38.6 H243.4 V51.9 H231.5 L229.8 50.2 Z" fill="#f2b431" stroke="#111" stroke-width="1.1"/><rect x="232.6" y="39.2" width="8" height="7" fill="#d2dde6" stroke="#111" stroke-width="1"/><rect x="233" y="48.3" width="7" height="3.5" fill="#f5f0e0" stroke="#111" stroke-width="1"/><rect x="254" y="40" width="1" height="14" fill="#f4f4f4"/><rect x="253" y="40" width="1" height="14" fill="#b2b2b2"/><rect x="332" y="40" width="1" height="14" fill="#f4f4f4"/><rect x="331" y="40" width="1" height="14" fill="#b2b2b2"/><rect x="410" y="40" width="1" height="14" fill="#f4f4f4"/><rect x="409" y="40" width="1" height="14" fill="#b2b2b2"/><rect x="510" y="40" width="1" height="14" fill="#f4f4f4"/><rect x="509" y="40" width="1" height="14" fill="#b2b2b2"/><rect x="566" y="40" width="1" height="14" fill="#f4f4f4"/><rect x="565" y="40" width="1" height="14" fill="#b2b2b2"/><circle cx="271" cy="45.2" r="7.3" fill="#22804a" stroke="#101010" stroke-width="1.4"/><circle cx="268.3" cy="41.8" r="1" fill="#c0f0c0"/><path d="M268 45.5 L272.5 41 V43.7 H278 V47.3 H272.5 V50 Z" fill="#fff" stroke="#151515" stroke-width="0.6"/><circle cx="292.6" cy="45.2" r="7.3" fill="#f2e030" stroke="#101010" stroke-width="1.4"/><path d="M292.8 44 A6 6 0 0 1 299 47" fill="none" stroke="#d8a020" stroke-width="1.5"/><path d="M294 40 L298.5 44.5 H296 V47.5 H298 V51.3 H290 V47.5 H292 V44.5 H289.5 Z" fill="#fff" stroke="#111" stroke-width="0.8"/><circle cx="314.4" cy="45.2" r="7.3" fill="#e0202a" stroke="#101010" stroke-width="1.4"/><circle cx="312" cy="41.7" r="1.1" fill="#ffd0d0"/><path d="M313 44 L320.5 51.8 M320.5 44 L313 51.8" stroke="#ffffff" stroke-width="1.6"/><path d="M342.5 38.5 H350 L352.5 41 V47.8 H342.5 Z" fill="#e8d8d0" stroke="#8c8c8c" stroke-width="1"/><rect x="341.5" y="48" width="12.5" height="3" fill="#e4e4e4" stroke="#8c8c8c" stroke-width="1"/><path d="M364.0 38.5 H368.5 V42.5 H372.5 V38.5 H377.0 V52 H372.5 V48.5 H368.5 V52 H364.0 Z" fill="#dcd6d6" stroke="#8c8c8c" stroke-width="1"/><path d="M366.0 40V50 M375.0 40V50" stroke="#f4f4f4"/><path d="M386.0 38.5 H390.5 V42.5 H394.5 V38.5 H399.0 V52 H394.5 V48.5 H390.5 V52 H386.0 Z" fill="#dcd6d6" stroke="#8c8c8c" stroke-width="1"/><path d="M388.0 40V50 M397.0 40V50" stroke="#f4f4f4"/><path d="M394.5 47.5H401.5M398 44V51" stroke="#8a8a8a" stroke-width="3.4"/><path d="M394.8 47.5H401.2M398 44.3V50.7" stroke="#ffffff" stroke-width="1.4"/><path d="M423.5 39 H430.0 L433.7 42.7 V51.7 H423.5 Z" fill="#d6eafa" stroke="#000" stroke-width="1.3"/><path d="M430.0 39 V42.7 H433.7 Z" fill="#b8c4cc" stroke="#000" stroke-width="1"/><path d="M423 38 L427 41.5 H424.8 V43.5 H421.2 V41.5 H419 Z" fill="#f4f430" stroke="#000" stroke-width="1.1"/><path d="M423 44.5 L427 48.0 H424.8 V50 H421.2 V48.0 H419 Z" fill="#f4f430" stroke="#000" stroke-width="1.1"/><path d="M445.3 39 H451.8 L455.5 42.7 V51.7 H445.3 Z" fill="#d6eafa" stroke="#000" stroke-width="1.3"/><path d="M451.8 39 V42.7 H455.5 Z" fill="#b8c4cc" stroke="#000" stroke-width="1"/><path d="M444.8 38 L448.8 41.5 H446.6 V47 H443.0 V41.5 H440.8 Z" fill="#f4f430" stroke="#000" stroke-width="1.1"/><path d="M467.3 39 H473.8 L477.5 42.7 V51.7 H467.3 Z" fill="#d6eafa" stroke="#000" stroke-width="1.3"/><path d="M473.8 39 V42.7 H477.5 Z" fill="#b8c4cc" stroke="#000" stroke-width="1"/><path d="M467 53 L471 49.5 H468.8 V44 H465.2 V49.5 H463 Z" fill="#f4f430" stroke="#000" stroke-width="1.1"/><path d="M489.3 39 H495.8 L499.5 42.7 V51.7 H489.3 Z" fill="#d6eafa" stroke="#000" stroke-width="1.3"/><path d="M495.8 39 V42.7 H499.5 Z" fill="#b8c4cc" stroke="#000" stroke-width="1"/><path d="M489 38.5 L493 42.0 H490.8 V45 H487.2 V42.0 H485 Z" fill="#f4f430" stroke="#000" stroke-width="1.1"/><path d="M489 53 L493 49.5 H490.8 V46.5 H487.2 V49.5 H485 Z" fill="#f4f430" stroke="#000" stroke-width="1.1"/><rect x="519.5" y="38.5" width="15" height="15" fill="#fcfcd8" stroke="#000" stroke-width="1.3"/><rect x="520.2" y="39.2" width="13.6" height="2.6" fill="#2a70a8"/><g stroke="#000" stroke-width="1"><path d="M527 43.5V46 M527 49V52 M521.5 47.5H524.5 M529.5 47.5H532.5 M523 44L524.8 45.8 M531 44L529.2 45.8 M523 51L524.8 49.2 M531 51L529.2 49.2"/></g><circle cx="527" cy="47.5" r="2" fill="#f4f400"/><rect x="541.8" y="38.5" width="15" height="15" fill="#fcfcd8" stroke="#000" stroke-width="1.3"/><rect x="542.5" y="39.2" width="13.6" height="2.6" fill="#2a70a8"/><path d="M543.5 51.5 L550.5 44.5 H548.5 L550.5 42.5 H554 V46 L552 48 V46 L545 53 Z" fill="#f4f000" stroke="#000" stroke-width="1"/><circle cx="583.2" cy="45.8" r="7.3" fill="#f6e020" stroke="#000" stroke-width="1.4"/><path d="M588 41 A6 6 0 0 1 588 51" fill="none" stroke="#e0a020" stroke-width="1.6"/><path d="M580 43.2 A3.3 3 0 1 1 585 45.3 L584.2 46.3 V47.7" fill="none" stroke="#000" stroke-width="3.2"/><path d="M580 43.2 A3.3 3 0 1 1 585 45.3 L584.2 46.3 V47.7" fill="none" stroke="#fff" stroke-width="1.5"/><rect x="582.5" y="49" width="3.4" height="3" fill="#fff" stroke="#000" stroke-width="1"/><rect x="597.8" y="38.6" width="13.5" height="12" fill="#fff" stroke="#000" stroke-width="1.3"/><rect x="599.4" y="40" width="3.5" height="8" fill="#20c020"/><rect x="602.9" y="40" width="3.3" height="8" fill="#e02020"/><rect x="606.2" y="40" width="3.6" height="8" fill="#3030c0"/><rect x="597.5" y="51" width="10" height="2" fill="#d0d0d0" stroke="#000" stroke-width="0.8"/><rect x="605.5" y="45.5" width="7" height="8" fill="#fff" stroke="#000" stroke-width="1.2"/><path d="M607 47.8H611M607 49.8H611M607 51.8H611" stroke="#000"/><path d="M21.5 106V107.8 M16.9 110V107.8 H26 V110" fill="none" stroke="#6a5a5a" stroke-width="1"/><rect x="18.5" y="101.3" width="5.6" height="4.2" fill="#c8c070" stroke="#000" stroke-width="1.3"/><rect x="14.5" y="110.3" width="5.6" height="4.2" fill="#c8c070" stroke="#000" stroke-width="1.3"/><rect x="23.4" y="110.3" width="5.6" height="4.2" fill="#c8c070" stroke="#000" stroke-width="1.3"/><rect x="100.8" y="103.2" width="7.5" height="11.5" rx="0.8" fill="#e4e4f8" stroke="#000" stroke-width="1.2"/><circle cx="102.6" cy="106.6" r="0.6" fill="#101070"/><circle cx="104.6" cy="106.6" r="0.6" fill="#101070"/><circle cx="106.6" cy="106.6" r="0.6" fill="#101070"/><circle cx="102.6" cy="108.8" r="0.6" fill="#101070"/><circle cx="104.6" cy="108.8" r="0.6" fill="#101070"/><circle cx="106.6" cy="108.8" r="0.6" fill="#101070"/><circle cx="102.6" cy="110.9" r="0.6" fill="#101070"/><circle cx="104.6" cy="110.9" r="0.6" fill="#101070"/><circle cx="106.6" cy="110.9" r="0.6" fill="#101070"/><rect x="102" y="112.2" width="5" height="1.5" fill="#8080a0"/><rect x="93.6" y="101.5" width="6.8" height="10" rx="0.8" fill="#fafaf4" stroke="#000" stroke-width="1.2"/><text x="94.6" y="110.2" font-family="Liberation Sans" font-size="9.5" font-weight="bold" fill="#000">§</text><path d="M311.5 108 L318 104 L326 108.5 V111 L319 115 L311.5 111 Z" fill="#d8a830" stroke="#000" stroke-width="1.2"/><path d="M313.8 104.8 L318 101.3 L322.8 106 L318.6 109.6 Z" fill="#dcecf6" stroke="#000" stroke-width="1.2"/><path d="M374.5 115.5 V101.7 H389.5" fill="none" stroke="#000" stroke-width="1.4"/><circle cx="378" cy="106.2" r="2" fill="#0a0ac8"/><circle cx="384" cy="106.2" r="2" fill="#0a0ac8"/><circle cx="389.4" cy="106.2" r="2" fill="#0a0ac8"/><circle cx="381" cy="112.3" r="2" fill="#c01818"/><circle cx="387" cy="112.3" r="2" fill="#c01818"/><path d="M460.6 100.5 H474.2 V114.2 H462.3 L460.6 112.5 Z" fill="#f0b030" stroke="#111" stroke-width="1.2"/><rect x="463.6" y="101" width="7.8" height="7.2" fill="#e8ecf0" stroke="#111" stroke-width="1.1"/><rect x="463.8" y="110.3" width="7.5" height="3.6" fill="#f5f2ea" stroke="#111" stroke-width="1.1"/><path d="M524 114.2 L525.3 110 L533 102.3 L536 105.3 L528.2 113 Z" fill="#e8cc40" stroke="#000" stroke-width="1.1"/><path d="M533 102.3 L536 105.3 L534.2 107 L531.3 104 Z" fill="#b8b0c8"/><path d="M524 114.2 L525 111.6 L526.6 113.2Z" fill="#000"/><path d="M488.6 307.6 L498.6 318 M498.6 307.6 L488.6 318" stroke="#000" stroke-width="1"/><circle cx="493.6" cy="312.8" r="4.8" fill="#e01018" stroke="#100" stroke-width="1.1"/><path d="M491 311.8 L492.6 310.2" stroke="#ffc0c0" stroke-width="1.2"/><circle cx="503" cy="312.8" r="4.7" fill="#d4d4d8" stroke="#000" stroke-width="1.2"/><circle cx="512.2" cy="312.8" r="4.7" fill="#d4d4dc" stroke="#000" stroke-width="1.2"/><rect x="9" y="641.5" width="11" height="13" fill="#f4f4f4" stroke="#909090" stroke-width="1"/><rect x="15" y="644" width="4" height="3" fill="#3a80d0"/><circle cx="12" cy="646.8" r="5" fill="#f8f0e8" stroke="#000" stroke-width="1.5"/><rect x="8" y="645" width="8" height="3.2" fill="#3a90e8"/><path d="M16 650.5 L20.3 655" stroke="#000" stroke-width="3"/><path d="M16.6 651.2 L19.8 654.4" stroke="#fff" stroke-width="1"/><rect x="34.8" y="641.8" width="11.4" height="13.6" fill="#fff" stroke="#000" stroke-width="1.7"/><rect x="36.3" y="643.4" width="8.4" height="3" fill="#7a9a00"/><rect x="36.3" y="647.6" width="8.4" height="3" fill="#7a9a00"/><rect x="36.3" y="651.8" width="8.4" height="3" fill="#7a9a00"/><rect x="56.3" y="641.8" width="11.4" height="13.6" fill="#fff" stroke="#000" stroke-width="1.7"/><rect x="57.8" y="643.4" width="8.4" height="3" fill="#6a8a00"/><rect x="57.8" y="647.6" width="8.4" height="3" fill="#6a8a00"/><rect x="57.8" y="651.8" width="8.4" height="3" fill="#c8ccd8"/><rect x="57.3" y="643.4" width="8.4" height="7.3" fill="#6a8a00"/><rect x="77.8" y="641.8" width="11.4" height="13.6" fill="#fff" stroke="#000" stroke-width="1.7"/><rect x="79.3" y="643.4" width="8.4" height="3" fill="#c4c8d4"/><rect x="79.3" y="647.6" width="8.4" height="3" fill="#c4c8d4"/><rect x="79.3" y="651.8" width="8.4" height="3" fill="#c4c8d4"/><path d="M43.5 647 L48.5 652 L45.7 652.3 L44.3 655 Z" fill="#fff" stroke="#000" stroke-width="1"/><path d="M65 647 L70 652 L67.2 652.3 L65.8 655 Z" fill="#fff" stroke="#000" stroke-width="1"/><path d="M86.5 647 L91.5 652 L88.7 652.3 L87.3 655 Z" fill="#fff" stroke="#000" stroke-width="1"/><rect x="104.3" y="641.8" width="11.4" height="13.6" fill="#fff" stroke="#000" stroke-width="1.7"/><rect x="105.8" y="643.4" width="8.4" height="3" fill="#c8d0f4"/><rect x="105.8" y="647.6" width="8.4" height="3" fill="#6a9a20"/><rect x="105.8" y="651.8" width="8.4" height="3" fill="#c8d0f4"/><rect x="126.3" y="641.8" width="11.4" height="13.6" fill="#fff" stroke="#000" stroke-width="1.7"/><rect x="127.8" y="643.4" width="8.4" height="3" fill="#c8d0f4"/><rect x="127.8" y="647.6" width="8.4" height="3" fill="#6a9a20"/><rect x="127.8" y="651.8" width="8.4" height="3" fill="#c8d0f4"/><rect x="168.3" y="641.8" width="11.4" height="13.6" fill="#fff" stroke="#000" stroke-width="1.7"/><rect x="169.8" y="643.4" width="8.4" height="3" fill="#c8d0f4"/><rect x="169.8" y="647.6" width="8.4" height="3" fill="#88a020"/><rect x="169.8" y="651.8" width="8.4" height="3" fill="#c8d0f4"/><path d="M111.5 649.5 H114.8 V646.2 H118.2 V649.5 H121.5 V652.9 H118.2 V656.2 H114.8 V652.9 H111.5 Z" fill="#e0e070" stroke="#000" stroke-width="1.3"/><path d="M133.5 649.5 H136.8 V646.2 H140.2 V649.5 H143.5 V652.9 H140.2 V656.2 H136.8 V652.9 H133.5 Z" fill="#e0e070" stroke="#000" stroke-width="1.3"/><rect x="175" y="650.5" width="8.5" height="4" fill="#d01010" stroke="#400" stroke-width="1"/><text x="146.5" y="652.5" font-family="Liberation Sans" font-size="11" font-weight="bold" fill="#000" letter-spacing="1.5">++</text><rect x="196.5" y="642" width="7.5" height="10.5" fill="#f4f0f0" stroke="#000" stroke-width="1.4"/><rect x="201" y="645.3" width="8" height="10" fill="#d8ecf8" stroke="#b01010" stroke-width="1.4"/><rect x="217.5" y="642" width="7.5" height="10.5" fill="#f4f080" stroke="#909020" stroke-width="1"/><path d="M219.5 644H223.5M219.5 646H223.5M219.5 648H223.5" stroke="#707000" stroke-width="0.8"/><path d="M221.8 644.5 H227.5 L230.5 647.5 V655.3 H221.8 Z" fill="#f8f070" stroke="#2020a0" stroke-width="1.4"/><path d="M223.5 648.5H228.5M223.5 650.5H228.5M223.5 652.5H228.5" stroke="#606000" stroke-width="0.8"/><rect x="249.3" y="641.5" width="5" height="4" fill="#f0e8d0" stroke="#000" stroke-width="1.2"/><rect x="247.3" y="645.3" width="9" height="3.5" fill="#4a90c8" stroke="#000" stroke-width="1.2"/><rect x="245.3" y="648.8" width="13" height="4.2" fill="#d8d080" stroke="#000" stroke-width="1.4"/><rect x="266.3" y="641.3" width="13" height="4.2" fill="#d8d080" stroke="#000" stroke-width="1.4"/><rect x="268.3" y="645.5" width="9" height="3.5" fill="#2a6aa8" stroke="#000" stroke-width="1.2"/><rect x="270.3" y="649" width="5" height="4" fill="#f0f0d8" stroke="#000" stroke-width="1.2"/></svg>
</body></html>
